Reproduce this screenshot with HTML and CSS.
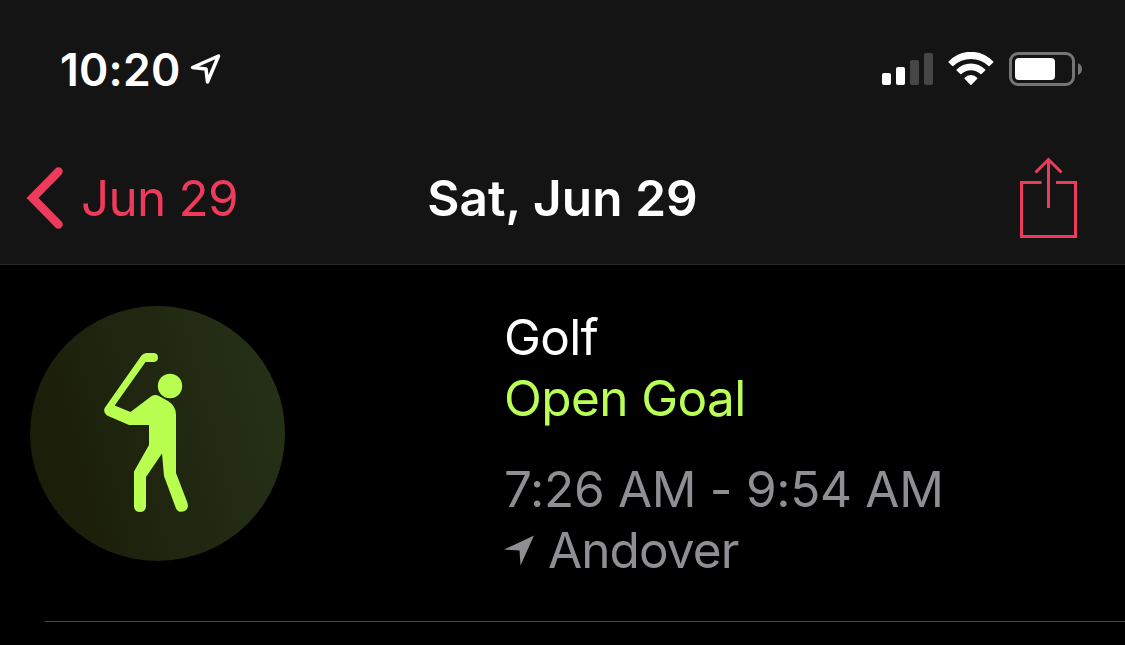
FILE: index.html
```
<!DOCTYPE html>
<html lang="en">
<head>
    <meta charset="utf-8">
    <title>Sat, Jun 29</title>
    <link rel="stylesheet" href="styles.css">
</head>
<body>
    <header class="header">
        <div class="status-bar">
            <span class="clock">10:20</span>
            <svg class="location" width="32" height="32" viewBox="0 0 32 32">
                <path d="M2.5 14.5L28.5 3L17.5 29L16 16Z"/>
            </svg>
            <svg class="signal" width="51" height="34" viewBox="0 0 51 34">
                <rect class="on" x="0" y="21" width="9" height="12" rx="2"/>
                <rect class="on" x="14" y="15" width="9" height="18" rx="2"/>
                <rect class="off" x="28" y="8" width="9" height="25" rx="2"/>
                <rect class="off" x="42" y="1" width="9" height="32" rx="2"/>
            </svg>
            <svg class="wifi" width="46" height="34" viewBox="0 0 46 34">
                <path d="M.6 9.5Q10 -.2 22.9 -.2T45.2 9.5Q45.6 10 45.2 10.500L41.500 14Q41 14.300 40.500 13.900Q33 6.900 22.900 6.900T5.300 13.900Q4.800 14.300 4.300 14L.6 10.500Q.2 10 .6 9.500Z"/>
                <path d="M8.600 17.600Q14.500 11.500 22.900 11.500T37.200 17.600Q37.600 18.100 37.200 18.600L33.500 22.100Q33 22.500 32.500 22Q28.500 18.200 22.900 18.200T13.300 22Q12.800 22.500 12.300 22.100L8.600 18.600Q8.200 18.100 8.600 17.600Z"/>
                <path d="M16.700 25.700Q19 23 22.900 23T29.100 25.700Q29.700 26.200 29.200 26.700L23.500 32.700Q22.900 33.200 22.300 32.700L16.600 26.700Q16.100 26.200 16.700 25.700Z"/>
            </svg>
            <svg class="battery" width="74" height="34" viewBox="0 0 74 34">
                <rect class="shell" x="1.5" y="1.5" width="63" height="31" rx="7.5"/>
                <rect class="level" x="6" y="6" width="40" height="22" rx="4"/>
                <path class="cap" d="M69 11Q73 13 73 17T69 23Z"/>
            </svg>
        </div>
        <nav class="nav-bar">
            <a class="back">
                <svg class="chevron" width="38" height="64" viewBox="0 0 38 64">
                    <path d="M32.5 5.5L6.5 32L32.5 58.500"/>
                </svg>
                <span class="back-label">Jun 29</span>
            </a>
            <h1 class="title">Sat, Jun 29</h1>
            <a class="share">
                <svg width="58" height="82" viewBox="0 0 58 82">
                    <path d="M21.5 25.5H1.5V79.5H55.5V25.5H36M28.5 51V3M15.5 15.5L28.5 2.5L41.5 15.5"/>
                </svg>
            </a>
        </nav>
    </header>
    <main class="workout">
        <div class="badge">
            <svg width="86" height="162" viewBox="0 0 86 162">
                <circle cx="66" cy="34" r="12.2"/>
                <!-- club, arms, torso and legs -->
                <path d="M42.500 1H50Q54 1.300 54 5.500T50 10H41.500L10.700 53.500L26.500 60L47 44.500Q51 42 55 44L64 49Q72 54 72 63V121L83.500 151Q85 156 81.500 158.500Q75 162 72 156.500L60 124L58 101.500L42 125V154.500Q41.500 160 36 160T30 154.500V119.500L45 93V73H25L3 63.500Q-1.500 60 1 55.500L37.500 3.500Q39.500 1 42.500 1Z"/>
            </svg>
        </div>
        <div class="details">
            <div class="name">Golf</div>
            <div class="goal">Open Goal</div>
            <div class="time">7:26 AM - 9:54 AM</div>
            <div class="place">
                <svg class="arrow" width="30" height="31" viewBox="0 0 30 31">
                    <path d="M0 14.5L30 .5L16.5 30.5L15.5 15.5Z"/>
                </svg>
                <span>Andover</span>
            </div>
        </div>
    </main>
</body>
</html>
```
FILE: styles.css
```
* {
    box-sizing: border-box;
}
body {
    margin: 0;
    height: 645px;
    overflow: hidden;
    background-color: #000;
    color: #fff;
    font-family: Inter, "Liberation Sans", sans-serif;
    font-size: 49.5px;
}
svg {
    display: block;
    flex: none;
}
.header {
    height: 265px;
    background-color: #141414;
    border-bottom: 1px solid #2b2b2b;
}
.status-bar {
    display: flex;
    align-items: center;
    height: 132px;
    padding: 6px 42px 0 60px;
}
.clock {
    width: 130px;
    padding-top: 2px;
    font-size: 44.5px;
    font-weight: 600;
    line-height: 60px;
    letter-spacing: 0.2px;
    white-space: nowrap;
}
.location {
    fill: none;
    stroke: #fff;
    stroke-width: 3.5;
    stroke-linejoin: round;
}
.signal {
    margin-left: auto;
}
.signal .on, .wifi, .battery .level {
    fill: #fff;
}
.signal .off {
    fill: #464646;
}
.wifi {
    margin: 0 15px;
}
.battery .shell {
    fill: none;
    stroke: #757575;
    stroke-width: 3;
}
.battery .cap {
    fill: #757575;
}
.nav-bar {
    display: grid;
    grid-template-columns: 1fr auto 1fr;
    align-items: center;
    height: 132px;
    padding: 0 26px;
}
.back {
    display: flex;
    align-items: center;
    color: #ee3a5b;
}
.back-label {
    margin-left: 17px;
    letter-spacing: -0.8px;
}
.chevron, .share svg {
    fill: none;
    stroke: #ee3a5b;
}
.chevron {
    stroke-width: 8.5;
    stroke-linecap: round;
}
.title {
    margin: 0;
    font-size: 49.5px;
    font-weight: 600;
    letter-spacing: 0.1px;
    white-space: nowrap;
}
.share {
    justify-self: end;
    margin-right: 21px;
}
.share svg {
    stroke-width: 3;
}
.workout {
    display: flex;
    height: 357px;
    margin-left: 45px;
    padding-top: 41px;
    border-bottom: 1px solid #4b4b4b;
}
.badge {
    display: flex;
    flex: none;
    width: 255px;
    height: 255px;
    margin-left: -15px;
    padding: 46px 0 0 74px;
    border-radius: 50%;
    background: linear-gradient(75deg, #191b07, #273218);
}
.badge svg {
    fill: #b9ff4f;
}
.details {
    margin: 1px 0 0 219px;
    line-height: 61px;
    white-space: nowrap;
}
.name {
    letter-spacing: -0.7px;
}
.goal {
    color: #b9ff55;
    letter-spacing: -0.6px;
}
.time {
    margin-top: 30px;
    letter-spacing: -0.3px;
}
.time, .place {
    color: #8e8e93;
}
.place {
    display: flex;
    align-items: center;
    letter-spacing: -0.9px;
}
.arrow {
    margin-right: 14px;
    fill: #8e8e93;
}
```
